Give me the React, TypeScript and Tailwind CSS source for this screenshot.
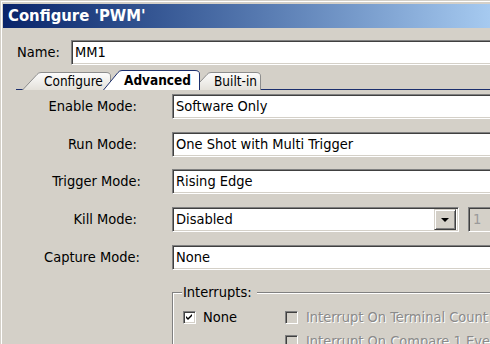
import React from 'react';

const font = "font-['DejaVu_Sans_Condensed','Liberation_Sans',sans-serif]";

// classic win32 sunken field edge
const sunken =
  'border border-t-[#808080] border-l-[#808080] border-b-white border-r-white shadow-[inset_1px_1px_0_#404040,inset_-1px_-1px_0_#d4d0c8]';
const raised =
  'border border-t-[#d4d0c8] border-l-[#d4d0c8] border-b-[#404040] border-r-[#404040] shadow-[inset_1px_1px_0_#fff,inset_-1px_-1px_0_#808080]';

interface TabShapeProps {
  w: number;
  h: number;
  active?: boolean;
}

const TabShape: React.FC<TabShapeProps> = ({ w, h, active }) => {
  const s = 16;
  const d = `M0.5 ${h} L${s - 1} 2.5 Q${s + 0.5} 0.5 ${s + 3} 0.5 L${w - 5} 0.5 Q${w - 0.5} 0.5 ${w - 0.5} 4 L${w - 0.5} ${h}`;
  return (
    <svg className="absolute inset-0" width={w} height={h} viewBox={`0 0 ${w} ${h}`}>
      <defs>
        <linearGradient id="tabg" x1="0" y1="0" x2="0" y2="1">
          <stop offset="0" stopColor="#fdfdfd" />
          <stop offset="1" stopColor="#e4e1da" />
        </linearGradient>
      </defs>
      <path d={d + ' Z'} fill={active ? '#ffffff' : 'url(#tabg)'} stroke="none" />
      <path d={d} fill="none" stroke={active ? '#1c2f6e' : '#8d8d8d'} strokeWidth="1" />
    </svg>
  );
};

const rows = [
  { label: 'Enable Mode:', value: 'Software Only', mt: 'mt-[4px]', pr: 'pr-[35px]' },
  { label: 'Run Mode:', value: 'One Shot with Multi Trigger', mt: 'mt-[13px]', pr: 'pr-[35px]' },
  { label: 'Trigger Mode:', value: 'Rising Edge', mt: 'mt-[12px]', pr: 'pr-[31px]' },
  { label: 'Kill Mode:', value: 'Disabled', mt: 'mt-[13px]', pr: 'pr-[35px]', combo: true },
  { label: 'Capture Mode:', value: 'None', mt: 'mt-[13px]', pr: 'pr-[32px]' },
];

const Check: React.FC<{ checked?: boolean; disabled?: boolean }> = ({ checked, disabled }) => (
  <div className={`w-[13px] h-[13px] shrink-0 flex items-center justify-center ${sunken} ${disabled ? 'bg-[#d4d0c8]' : 'bg-white'}`}>
    {checked && (
      <svg width="7" height="7" viewBox="0 0 7 7">
        <path d="M0 2 L2 4 L6 0 L6 2 L2 6 L0 4 Z" fill="#000" />
      </svg>
    )}
  </div>
);

export default function App() {
  return (
    <div className={`w-[490px] h-[344px] overflow-hidden bg-[#d4d0c8] pt-[1px] pl-[1px] text-black ${font}`}>
      <div className="h-full border-t border-l border-white pt-[2px]">
        {/* title bar */}
        <div className="ml-[1px] h-[24px] flex items-center pl-[5px] bg-gradient-to-r from-[#0a246a] to-[#a6caf0]">
          <span className="text-white font-bold text-[16.5px] leading-none">Configure 'PWM'</span>
        </div>

        {/* name */}
        <div className="mt-[12px] flex items-center h-[25px]">
          <span className="ml-[15px] w-[54px] shrink-0 text-[14.5px]">Name:</span>
          <div className={`w-[440px] shrink-0 h-[25px] bg-white ${sunken} flex items-center pl-[3px] text-[14.5px]`}>MM1</div>
        </div>

        {/* tabs */}
        <div className="mt-[5px] ml-[14px] h-[20px] border-b border-[#1c2f6e] flex items-end pl-[6px]">
          <div className="relative shrink-0 -mb-px w-[89px] h-[18px] flex items-center text-[13.5px]">
            <TabShape w={89} h={18} />
            <span className="relative pl-[22px] pt-[1px]">Configure</span>
          </div>
          <div className="relative shrink-0 z-10 -mb-px -ml-[8px] w-[97px] h-[20px] flex items-center text-[13.5px] font-bold">
            <TabShape w={97} h={20} active />
            <span className="relative pl-[21px] pt-[1px]">Advanced</span>
          </div>
          <div className="relative shrink-0 -mb-px -ml-[8px] w-[69px] h-[18px] flex items-center text-[13.5px]">
            <TabShape w={69} h={18} />
            <span className="relative pl-[22px] pt-[1px]">Built-in</span>
          </div>
        </div>

        {/* fields */}
        {rows.map((r) => (
          <div key={r.label} className={`${r.mt} flex items-center h-[25px] text-[14.5px]`}>
            <span className={`w-[170px] shrink-0 text-right ${r.pr}`}>{r.label}</span>
            {r.combo ? (
              <div className="flex items-center shrink-0">
                <div className={`w-[287px] h-[25px] bg-white ${sunken} flex items-center pl-[3px] pr-[2px]`}>
                  <span className="flex-1">{r.value}</span>
                  <div className={`w-[22px] h-[21px] bg-[#d4d0c8] ${raised} flex items-center justify-center`}>
                    <svg width="8" height="4" viewBox="0 0 8 4">
                      <path d="M0 0 L8 0 L4 4 Z" fill="#000" />
                    </svg>
                  </div>
                </div>
                <div className={`ml-[9px] w-[40px] h-[25px] bg-[#d4d0c8] ${sunken} flex items-center pl-[4px] text-[#9a9a9a]`}>
                  1
                </div>
              </div>
            ) : (
              <div className={`w-[330px] shrink-0 h-[25px] bg-white ${sunken} flex items-center pl-[3px]`}>{r.value}</div>
            )}
          </div>
        ))}

        {/* interrupts group */}
        <div className="mt-[22px] ml-[170px] w-[330px] h-[80px] border-t border-l border-[#808080] shadow-[inset_1px_1px_0_#fff] text-[14.5px]">
          <div className="w-fit -mt-[9px] ml-[9px] pl-[1px] pr-[5px] bg-[#d4d0c8] leading-[17px]">Interrupts:</div>
          <div className="mt-[8px] ml-[10px] flex items-center h-[17px]">
            <div className="w-[102px] shrink-0 flex items-center gap-[7px]">
              <Check checked />
              <span>None</span>
            </div>
            <div className="flex items-center gap-[8px] text-[#8a8a8a] [text-shadow:1px_1px_0_#fff] whitespace-nowrap">
              <Check disabled />
              <span>Interrupt On Terminal Count</span>
            </div>
          </div>
          <div className="mt-[7px] ml-[112px] flex items-center h-[17px] gap-[8px] text-[#8a8a8a] [text-shadow:1px_1px_0_#fff] whitespace-nowrap">
            <Check disabled />
            <span>Interrupt On Compare 1 Event</span>
          </div>
        </div>
      </div>
    </div>
  );
}
